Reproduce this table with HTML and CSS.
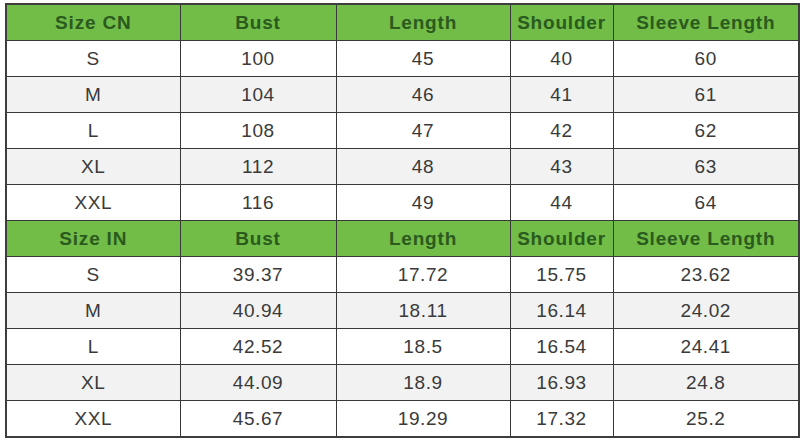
FILE: index.html
```html
<!DOCTYPE html>
<html>
<head>
<meta charset="utf-8">
<link rel="stylesheet" href="styles.css">
</head>
<body>
<table class="size-table">
  <colgroup>
    <col class="c1"><col class="c2"><col class="c3"><col class="c4"><col class="c5">
  </colgroup>
  <tr class="head"><th>Size CN</th><th>Bust</th><th>Length</th><th>Shoulder</th><th>Sleeve Length</th></tr>
  <tr><td>S</td><td>100</td><td>45</td><td>40</td><td>60</td></tr>
  <tr class="alt"><td>M</td><td>104</td><td>46</td><td>41</td><td>61</td></tr>
  <tr><td>L</td><td>108</td><td>47</td><td>42</td><td>62</td></tr>
  <tr class="alt"><td>XL</td><td>112</td><td>48</td><td>43</td><td>63</td></tr>
  <tr><td>XXL</td><td>116</td><td>49</td><td>44</td><td>64</td></tr>
  <tr class="head"><th>Size IN</th><th>Bust</th><th>Length</th><th>Shoulder</th><th>Sleeve Length</th></tr>
  <tr><td>S</td><td>39.37</td><td>17.72</td><td>15.75</td><td>23.62</td></tr>
  <tr class="alt"><td>M</td><td>40.94</td><td>18.11</td><td>16.14</td><td>24.02</td></tr>
  <tr><td>L</td><td>42.52</td><td>18.5</td><td>16.54</td><td>24.41</td></tr>
  <tr class="alt"><td>XL</td><td>44.09</td><td>18.9</td><td>16.93</td><td>24.8</td></tr>
  <tr><td>XXL</td><td>45.67</td><td>19.29</td><td>17.32</td><td>25.2</td></tr>
</table>
</body>
</html>
```

FILE: styles.css
```css
html, body {
  margin: 0;
  padding: 0;
  background: #ffffff;
}
body {
  padding: 3px 0 0 5px;
}
.size-table {
  border-collapse: collapse;
  table-layout: fixed;
  width: 793px;
  border: 2px solid #3d3d3d;
  font-family: "Liberation Sans", Arial, sans-serif;
}
.c1 { width: 174px; }
.c2 { width: 156px; }
.c3 { width: 174px; }
.c4 { width: 103px; }
.c5 { width: 186px; }
.size-table th,
.size-table td {
  border: 1px solid #383838;
  height: 35px;
  padding: 0;
  text-align: center;
  vertical-align: middle;
  line-height: 1;
}
.size-table td {
  font-size: 19px;
  letter-spacing: 0.6px;
  color: #3a3a3a;
  font-weight: normal;
}
.size-table th {
  font-size: 19px;
  letter-spacing: 0.8px;
  font-weight: bold;
  color: #2b5a1e;
  background: #71bd47;
}
.size-table tr.alt td {
  background: #f2f2f2;
}
```
